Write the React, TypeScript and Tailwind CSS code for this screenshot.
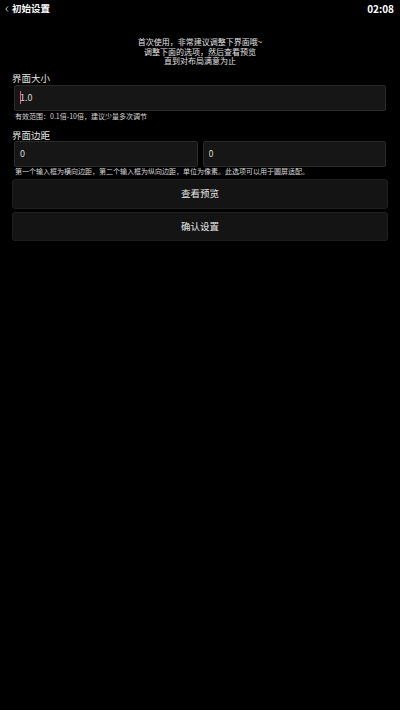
import { useState } from "react";

const font = { fontFamily: '"Noto Sans CJK SC", "Noto Sans", sans-serif' };

export default function App() {
  const [scale, setScale] = useState("1.0");
  const [marginX, setMarginX] = useState("0");
  const [marginY, setMarginY] = useState("0");

  return (
    <div
      className="w-[400px] h-[710px] bg-black text-[#e6e6e6] overflow-hidden font-['Noto_Sans_CJK_SC','Noto_Sans',sans-serif]"
      style={font}
    >
      {/* Top bar */}
      <div className="h-[17px] flex items-center justify-between pl-[4px] pr-[6px]">
        <div className="flex items-center">
          <svg width="6" height="8" viewBox="0 0 6 8" className="mr-[2px]">
            <path d="M4 1.5 L1.8 4 L4 6.5" stroke="#dcdcdc" strokeWidth="0.9" fill="none" />
          </svg>
          <span className="text-[9.5px] font-bold leading-none text-white">初始设置</span>
        </div>
        <span className="text-[10px] font-bold leading-none text-white">02:08</span>
      </div>

      {/* Intro */}
      <div className="mt-[20px] text-center text-[8px] leading-[9.5px] text-[#e0e0e0]">
        <p>首次使用，非常建议调整下界面哦~</p>
        <p>调整下面的选项，然后查看预览</p>
        <p>直到对布局满意为止</p>
      </div>

      {/* Scale */}
      <div className="mt-[6px] pl-[12px] text-[9.5px] leading-[12px] text-[#e6e6e6]">界面大小</div>
      <div className="mt-px px-[14px]">
        <div className="h-[26px] flex items-center rounded-[2px] border border-[#2a2a2a] bg-[#161616] pl-[5px]">
          <span className="w-px h-[13px] bg-[#ff4f8b]" />
          <input
            value={scale}
            onChange={(e) => setScale(e.target.value)}
            className="flex-1 bg-transparent outline-none text-[9px] text-[#d8d8d8] -ml-[1px]"
          />
        </div>
      </div>
      <div className="mt-[1px] pl-[15px] text-[7px] leading-[9px] text-[#d6d6d6]">
        有效范围：0.1倍-10倍，建议少量多次调节
      </div>

      {/* Margin */}
      <div className="mt-[8px] pl-[12px] text-[9.5px] leading-[12px] text-[#e6e6e6]">界面边距</div>
      <div className="px-[14px] flex gap-[5px]">
        <input
          value={marginX}
          onChange={(e) => setMarginX(e.target.value)}
          className="flex-1 min-w-0 h-[26px] rounded-[2px] border border-[#2a2a2a] bg-[#161616] pl-[5px] outline-none text-[9px] text-[#d8d8d8]"
        />
        <input
          value={marginY}
          onChange={(e) => setMarginY(e.target.value)}
          className="flex-1 min-w-0 h-[26px] rounded-[2px] border border-[#2a2a2a] bg-[#161616] pl-[5px] outline-none text-[9px] text-[#d8d8d8]"
        />
      </div>
      <div className="pl-[15px] text-[7px] leading-[9px] text-[#d6d6d6] mt-[0.5px]">
        第一个输入框为横向边距，第二个输入框为纵向边距，单位为像素。此选项可以用于圆屏适配。
      </div>

      {/* Buttons */}
      <div className="px-[12px] mt-[2.5px] flex flex-col gap-[3px]">
        <button className="h-[30px] rounded-[3px] border border-[#1e1e1e] bg-[#141414] text-[9.5px] text-[#e6e6e6]">
          查看预览
        </button>
        <button className="h-[29px] rounded-[3px] border border-[#1e1e1e] bg-[#141414] text-[9.5px] text-[#e6e6e6]">
          确认设置
        </button>
      </div>
    </div>
  );
}
